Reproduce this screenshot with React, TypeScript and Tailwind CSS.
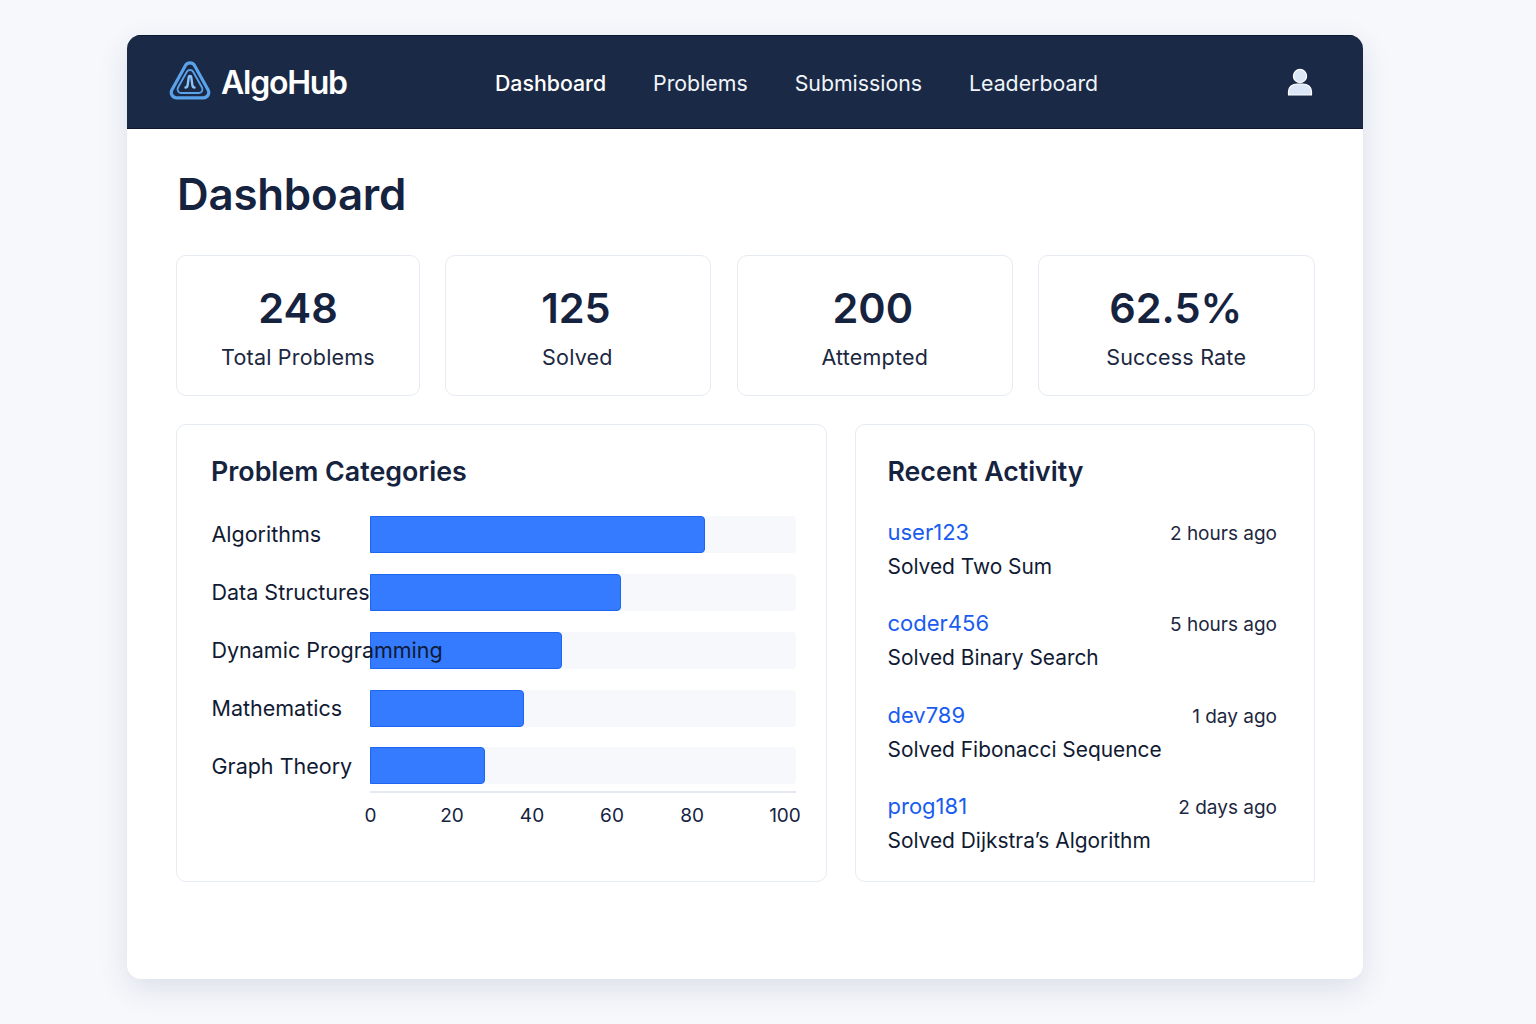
import React from "react";

const stats = [
  { value: "248", label: "Total Problems", nudge: "", lnudge: "" },
  { value: "125", label: "Solved", nudge: "-ml-[5px]", lnudge: "-ml-[2px]" },
  { value: "200", label: "Attempted", nudge: "-ml-[4px]", lnudge: "" },
  { value: "62.5%", label: "Success Rate", nudge: "-ml-[2px]", lnudge: "-ml-[1px]" },
];
const bars = [
  { name: "Algorithms", w: 335 },
  { name: "Data Structures", w: 251 },
  { name: "Dynamic Programming", w: 192 },
  { name: "Mathematics", w: 154 },
  { name: "Graph Theory", w: 115 },
];
const activity = [
  { user: "user123", time: "2 hours ago", text: "Solved Two Sum" },
  { user: "coder456", time: "5 hours ago", text: "Solved Binary Search" },
  { user: "dev789", time: "1 day ago", text: "Solved Fibonacci Sequence" },
  { user: "prog181", time: "2 days ago", text: "Solved Dijkstra’s Algorithm" },
];
const ticks = [
  { t: "0", c: "w-[12px] -ml-[5.500px]" },
  { t: "20", c: "w-[60px] ml-[45.500px]" },
  { t: "40", c: "w-[60px] ml-[20px]" },
  { t: "60", c: "w-[60px] ml-[20px]" },
  { t: "80", c: "w-[60px] ml-[20px]" },
  { t: "100", c: "w-[40px] ml-[43px]" },
];

function Logo() {
  return (
    <svg width="42" height="44" viewBox="0 0 42 44" fill="none" className="shrink-0">
      <path d="M16.600 5.200c2-3.200 6.800-3.200 8.800 0l13.600 24.600c2 3.600-.4 8-4.500 8H7.500c-4.100 0-6.500-4.400-4.500-8z" stroke="#5aa2ea" strokeWidth="3.200" strokeLinejoin="round" />
      <path d="M18 11.500c1.300-2 4.700-2 6 0l9 16c1.300 2.400-.2 5.500-3 5.500H12c-2.800 0-4.300-3.100-3-5.500z" stroke="#5aa2ea" strokeWidth="1.900" strokeLinejoin="round" />
      <path d="M16.500 27.500c1.200 0 1.800-.6 2.100-2.200l1.200-8.400c.2-1.400 2.200-1.400 2.400 0l1.200 8.400c.3 1.600.9 2.200 2.100 2.200" stroke="#8cc2f5" strokeWidth="2.400" strokeLinecap="round" />
    </svg>
  );
}

function UserIcon() {
  return (
    <svg width="26" height="30" viewBox="0 0 26 30" className="shrink-0">
      <circle cx="13" cy="8" r="6.600" fill="#dbe6f6" stroke="#fff" strokeWidth="1.200" />
      <path d="M1.500 27v-3.500C1.500 19 5.500 16 10 16h6c4.500 0 8.500 3 8.500 7.500V27z" fill="#dbe6f6" stroke="#fff" strokeWidth="1.200" strokeLinejoin="round" />
    </svg>
  );
}

export default function App() {
  return (
    <div className="min-h-[1024px] bg-[#f6f8fc] pt-[35px] pl-[127px] font-['Inter','Liberation_Sans',sans-serif] text-[#101a33]">
      <div className="flex h-[944px] w-[1236px] flex-col overflow-hidden rounded-[14px] bg-white shadow-[0_10px_30px_rgba(30,50,90,0.12)]">
        <header className="relative flex h-[94px] shrink-0 items-center border-y border-[#0d1730] bg-[#1a2945] text-white">
          <div className="flex w-[368px] items-center gap-[10px] pl-[42px]">
            <Logo />
            <span className="mt-[2px] text-[32px] font-semibold leading-none tracking-[-1.250px]">AlgoHub</span>
          </div>
          <nav className="mt-[3px] flex items-center gap-[47px] text-[21.300px] leading-none">
            <span className="font-medium">Dashboard</span>
            <span className="text-[#f1f5fb]">Problems</span>
            <span className="text-[#f1f5fb]">Submissions</span>
            <span className="text-[#f1f5fb]">Leaderboard</span>
          </nav>
          <div className="ml-auto mt-[1px] pr-[50px]">
            <UserIcon />
          </div>
        </header>

        <main className="flex flex-1 flex-col pl-[49px]">
          <h1 className="mt-[36px] pl-[1px] text-[43.800px] font-semibold leading-[60px] tracking-[-0.2px] text-[#16233f]">Dashboard</h1>

          <div className="mt-[30px] grid w-[1139.500px] grid-cols-[244px_266px_276px_277px] gap-x-[25.400px]">
            {stats.map((s) => (
              <div key={s.label} className="flex h-[140.500px] flex-col items-center rounded-[10px] border border-[#e6ebf3] pt-[25px]">
                <div className={`text-[41.500px] font-semibold leading-[54px] text-[#16233f] ${s.nudge}`}>{s.value}</div>
                <div className={`mt-[9px] text-[21.500px] leading-[26px] tracking-[0.2px] text-[#1c2740] ${s.lnudge}`}>{s.label}</div>
              </div>
            ))}
          </div>

          <div className="mt-[28.500px] flex gap-[28px]">
            <section className="h-[458px] w-[651px] rounded-[10px] border border-[#e6ebf3] pt-[28px] pl-[34px]">
              <h2 className="text-[26.800px] font-semibold leading-[36px] text-[#16233f]">Problem Categories</h2>
              <div className="mt-[27px] flex flex-col gap-[20.850px]">
                {bars.map((b) => (
                  <div key={b.name} className="relative flex h-[37px] items-center">
                    <div className="relative z-10 w-[159px] shrink-0 whitespace-nowrap pl-[0.500px] pt-[1px] text-[21.500px] leading-none text-[#101a33]">{b.name}</div>
                    <div className="h-full w-[426px] shrink-0 rounded-r-[4px] bg-[#f7f8fb]">
                      <div className="h-full rounded-r-[4px] border border-[#1c66f2] bg-[#347bff]" style={{ width: b.w }} />
                    </div>
                  </div>
                ))}
              </div>
              <div className="mt-[7px] ml-[159px] h-[2px] w-[426px] bg-[#e4e8f1]" />
              <div className="mt-[11px] ml-[159px] flex text-[19px] leading-[24px] text-[#16233f]">
                {ticks.map((x) => (
                  <span key={x.t} className={`${x.c} text-center`}>{x.t}</span>
                ))}
              </div>
            </section>

            <section className="h-[458px] w-[460px] rounded-l-[10px] rounded-tr-[10px] border border-[#e6ebf3] pt-[28px] pl-[31.500px] pr-[37px]">
              <h2 className="text-[26.700px] font-semibold leading-[36px] text-[#16233f]">Recent Activity</h2>
              <div className="mt-[26.500px] flex flex-col gap-[22.500px]">
                {activity.map((a) => (
                  <div key={a.user} className="h-[69px]">
                    <div className="flex items-start justify-between">
                      <span className="text-[22px] leading-[32px] text-[#1a5cf0]">{a.user}</span>
                      <span className="mt-[3px] text-[19px] leading-[30px] text-[#1c2740]">{a.time}</span>
                    </div>
                    <div className="mt-[1px] text-[20.900px] leading-[34px] text-[#101a33]">{a.text}</div>
                  </div>
                ))}
              </div>
            </section>
          </div>
        </main>
      </div>
    </div>
  );
}
